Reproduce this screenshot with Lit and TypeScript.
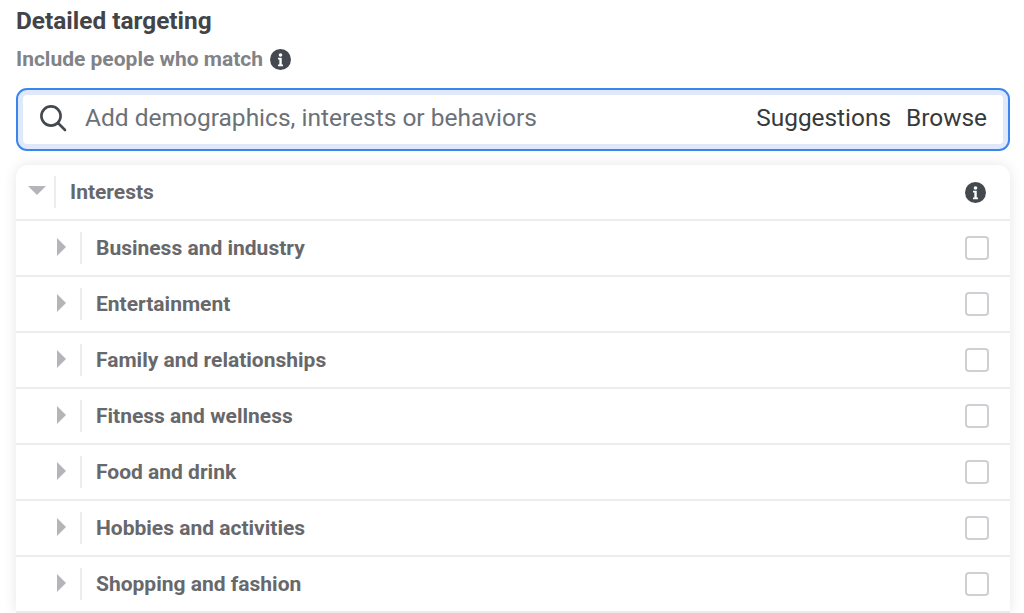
import { LitElement, html, css, svg } from "lit";
import { customElement } from "lit/decorators.js";

const infoIcon = (size: number) => html`<svg class="info" width=${size} height=${size} viewBox="0 0 22 22" aria-hidden="true">
  <circle cx="11" cy="11" r="11" fill="#444950"></circle>
  <circle cx="11" cy="6.3" r="1.9" fill="#fff"></circle>
  <path d="M8.4 9.2h3.9v7h1.3v1.8H8.4v-1.8h1.4v-5.2H8.4z" fill="#fff"></path>
</svg>`;

const ITEMS = [
  "Business and industry",
  "Entertainment",
  "Family and relationships",
  "Fitness and wellness",
  "Food and drink",
  "Hobbies and activities",
  "Shopping and fashion",
];

@customElement("app-root")
export class AppRoot extends LitElement {
  static styles = css`
    :host {
      display: block;
      width: 1024px;
      height: 613px;
      overflow: hidden;
      background: #fff;
      font-family: Roboto, "Liberation Sans", sans-serif;
      box-sizing: border-box;
      padding: 6px 14px 0 16px;
    }
    .title {
      font-size: 24.4px;
      font-weight: 700;
      line-height: 30px;
      color: #434447;
    }
    .sub {
      display: flex;
      align-items: center;
      gap: 7px;
      margin-top: 8px;
      height: 30px;
      font-size: 21px;
      font-weight: 700;
      color: #828387;
    }
    .search {
      box-sizing: border-box;
      margin-top: 14px;
      height: 63px;
      display: flex;
      align-items: center;
      border: 2px solid #3b86ee;
      border-radius: 11px;
      box-shadow: inset 0 0 0 5px #dfe9fb;
      padding: 0 21px 4px 21px;
      background: #fff;
    }
    .search svg { flex: none; margin-right: 18px; }
    .placeholder {
      flex: 1;
      font-size: 24.5px;
      color: #6c7178;
    }
    .link {
      font-size: 24.4px;
      color: #38393b;
      margin-left: 15px;
    }
    .list {
      margin-top: 14px;
      background: #fff;
      border-radius: 12px 12px 0 0;
      box-shadow: 0 0 14px rgba(0, 0, 0, 0.1);
    }
    .row {
      box-sizing: border-box;
      height: 56px;
      display: flex;
      align-items: center;
      border-bottom: 2px solid #ececed;
      color: #67686b;
      font-size: 21px;
      font-weight: 700;
    }
    .row.head { height: 56px; padding-left: 12px; }
    .row.item { padding-left: 41px; }
    .arrow-down {
      width: 0;
      height: 0;
      border-left: 9px solid transparent;
      border-right: 9px solid transparent;
      border-top: 9px solid #b3b5b9;
      margin-right: 8px;
      margin-top: -4px;
    }
    .arrow-right {
      width: 0;
      height: 0;
      border-top: 9px solid transparent;
      border-bottom: 9px solid transparent;
      border-left: 9px solid #b3b5b9;
      margin-right: 14px;
      margin-top: -2px;
    }
    .sep {
      width: 2px;
      height: 32px;
      background: #ececed;
      margin-right: 14px;
    }
    .label { flex: 1; }
    .info { flex: none; display: block; }
    .head .info { margin-right: 24px; }
    .box {
      flex: none;
      box-sizing: border-box;
      width: 24px;
      height: 24px;
      border: 2px solid #ced0d4;
      border-radius: 4px;
      margin-right: 21px;
      background: #fff;
    }
  `;

  render() {
    return html`
      <div class="title">Detailed targeting</div>
      <div class="sub">Include people who match ${infoIcon(21)}</div>
      <div class="search">
        <svg width="28" height="28" viewBox="0 0 28 28" fill="none" stroke="#444950" stroke-width="2.6" aria-hidden="true">
          ${svg`<circle cx="12" cy="12" r="9.6"></circle><path d="M19 19l7 7" stroke-linecap="round"></path>`}
        </svg>
        <span class="placeholder">Add demographics, interests or behaviors</span>
        <span class="link">Suggestions</span>
        <span class="link">Browse</span>
      </div>
      <div class="list">
        <div class="row head">
          <span class="arrow-down"></span><span class="sep"></span>
          <span class="label">Interests</span>
          ${infoIcon(21)}
        </div>
        ${ITEMS.map(
          (t) => html`<div class="row item">
            <span class="arrow-right"></span><span class="sep"></span>
            <span class="label">${t}</span>
            <span class="box"></span>
          </div>`
        )}
      </div>
    `;
  }
}
